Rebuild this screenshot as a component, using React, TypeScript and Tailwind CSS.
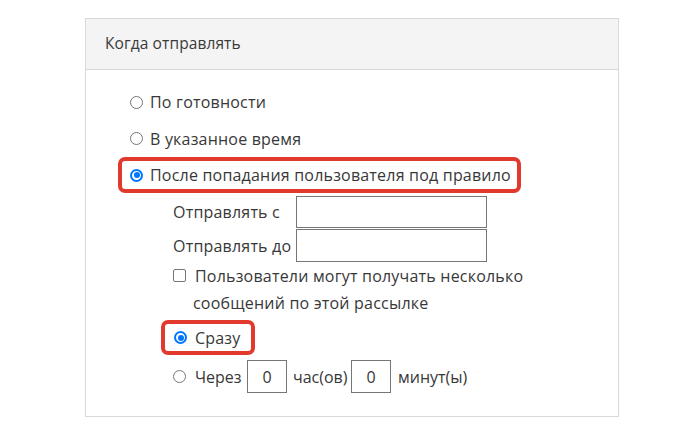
import React from "react";

const font = { fontFamily: '"Open Sans", "Noto Sans", sans-serif' };

function Radio({ checked }: { checked?: boolean }) {
  if (checked) {
    return (
      <span className="inline-flex w-[13px] h-[13px] shrink-0 rounded-full border-[2px] border-[#0075ff] bg-white items-center justify-center">
        <span className="w-[6px] h-[6px] rounded-full bg-[#0075ff]" />
      </span>
    );
  }
  return <span className="inline-block w-[13px] h-[13px] shrink-0 rounded-full border border-[#767676] bg-white" />;
}

export default function App() {
  return (
    <div className="w-[679px] h-[426px] bg-white text-[#383838] font-['Open_Sans',sans-serif]" style={font}>
      <div className="pt-[18px] pl-[85px]">
        <div className="w-[534px] h-[399px] border border-[#d9d9d9] flex flex-col">
          <div className="h-[51px] shrink-0 bg-[#f4f4f4] border-b border-[#d9d9d9] pl-[19px] flex items-center text-[15.5px] tracking-[0.1px] text-[#3a3a3a]">
            Когда отправлять
          </div>
          <div className="pl-[32px] pt-[14px] text-[16px] tracking-[0.2px]">
            <div className="h-[36px] flex items-center border-4 border-transparent pl-[8px] gap-[7px]">
              <Radio />
              <span>По готовности</span>
            </div>
            <div className="h-[37px] flex items-center border-4 border-transparent pl-[8px] gap-[7px]">
              <Radio />
              <span>В указанное время</span>
            </div>
            <div className="h-[36px] w-[403px] flex items-center border-4 border-[#e2392f] rounded-[7px] pl-[8px] gap-[7px]">
              <Radio checked />
              <span>После попадания пользователя под правило</span>
            </div>
            <div className="pl-[55px] pt-[3px]">
              <div className="flex items-center h-[32px]">
                <span className="w-[123px]">Отправлять с</span>
                <span className="w-[191px] h-[32px] border border-[#767676]" />
              </div>
              <div className="flex items-center h-[33px] mt-[1px]">
                <span className="w-[123px]">Отправлять до</span>
                <span className="w-[191px] h-[33px] border border-[#767676]" />
              </div>
              <div className="flex pt-[1px] leading-[27px]">
                <span className="w-[20px] shrink-0 pt-[6px]">
                  <span className="block w-[13px] h-[13px] rounded-[2px] border border-[#767676] bg-white" />
                </span>
                <div>
                  <div className="pl-[2px]">Пользователи могут получать несколько</div>
                  <div>сообщений по этой рассылке</div>
                </div>
              </div>
              <div className="-ml-[12px] mt-[3px] h-[35px] w-[94px] flex items-center border-4 border-[#e2392f] rounded-[7px] pl-[9px] gap-[8px]">
                <Radio checked />
                <span>Сразу</span>
              </div>
              <div className="flex items-center h-[33px] mt-[5px] tracking-normal">
                <Radio />
                <span className="ml-[9px] w-[44px]">Через</span>
                <span className="ml-[8px] w-[40px] h-[33px] border border-[#767676] flex items-center justify-center">0</span>
                <span className="ml-[6px] w-[52px]">час(ов)</span>
                <span className="ml-[6px] w-[40px] h-[33px] border border-[#767676] flex items-center justify-center">0</span>
                <span className="ml-[7px]">минут(ы)</span>
              </div>
            </div>
          </div>
        </div>
      </div>
    </div>
  );
}
